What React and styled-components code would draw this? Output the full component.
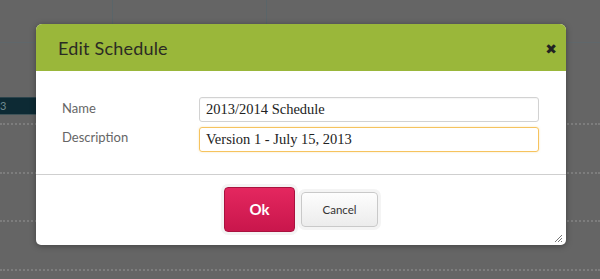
import React from "react";
import styled, { createGlobalStyle } from "styled-components";

const Global = createGlobalStyle`
  html, body { margin: 0; padding: 0; }
  body { width: 600px; height: 279px; overflow: hidden; background: #666; font-family: "Lato", "Open Sans", sans-serif; }
`;

const Page = styled.div`
  position: relative;
  width: 600px;
  height: 279px;
  background: #656565;
  overflow: hidden;
`;

const Board = styled.div`
  display: flex;
  flex-direction: column;
`;

const TopRow = styled.div`
  display: grid;
  grid-template-columns: 113px 154px 1fr;
  height: 42px;
  border-bottom: 1px solid #5f676b;
`;

const TopCell = styled.div`
  border-right: ${(p) => (p.$line ? "1px solid #5a6569" : "none")};
`;

const DarkBar = styled.div`
  margin-top: 54px;
  height: 16px;
  width: 120px;
  background: #0d2a34;
  border-top: 1px solid #2b434b;
  border-bottom: 1px solid #3f5358;
  color: #6f8a90;
  font-size: 11px;
  line-height: 16px;
  box-sizing: content-box;
`;

const Dotted = styled.div`
  margin-top: ${(p) => p.$gap}px;
  height: 0;
  border-top: 2px dotted #7d7d7d;
`;

const Dialog = styled.div`
  position: absolute;
  left: 36px;
  top: 24px;
  width: 530px;
  height: 221px;
  background: #fff;
  border-radius: 6px 6px 5px 5px;
  box-shadow: 0 1px 6px rgba(0, 0, 0, 0.35);
  display: flex;
  flex-direction: column;
  overflow: hidden;
`;

const Header = styled.div`
  height: 47px;
  background: #9ab73a;
  display: flex;
  align-items: center;
  justify-content: space-between;
  padding: 0 9px 0 22px;
  flex-shrink: 0;
`;

const Title = styled.div`
  font-family: "Lato", "Open Sans", sans-serif;
  font-size: 18px;
  color: #2b2b24;
  letter-spacing: 0.2px;
`;

const Close = styled.div`
  font-family: "DejaVu Sans", sans-serif;
  font-weight: bold;
  font-size: 14px;
  color: #222;
  margin-top: 2px;
`;

const Body = styled.div`
  padding: 26px 27px 22px 26px;
  display: grid;
  grid-template-columns: 137px 340px;
  row-gap: 5px;
  align-items: center;
  border-bottom: 1px solid #cfcfcf;
`;

const Label = styled.div`
  font-family: "Lato", sans-serif;
  font-size: 13px;
  color: #666;
  margin-top: ${(p) => p.$offset || 0}px;
  align-self: start;
`;

const Input = styled.div`
  height: 25px;
  box-sizing: border-box;
  border: 1px solid ${(p) => (p.$focus ? "#f6c35e" : "#d2d2d2")};
  border-radius: 3px;
  padding: 0 6px;
  font-family: "Liberation Serif", "DejaVu Serif", serif;
  font-size: 14.5px;
  color: #222;
  line-height: 23px;
  box-shadow: ${(p) => (p.$focus ? "0 0 2px rgba(246, 195, 94, 0.5)" : "inset 0 1px 1px rgba(0,0,0,0.04)")};
`;

const Footer = styled.div`
  flex: 1;
  display: flex;
  justify-content: center;
  align-items: center;
  gap: 6px;
  padding-bottom: 2px;
  position: relative;
`;

const Button = styled.button`
  box-sizing: border-box;
  border-radius: 4px;
  cursor: pointer;
  font-family: "Lato", sans-serif;
  box-shadow: 0 0 0 3px #f4f4f4;
  padding: 0;
`;

const OkButton = styled(Button)`
  width: 71px;
  height: 45px;
  background: linear-gradient(#e4275f, #c9164c);
  border: 1px solid #a9123f;
  color: #fff;
  font-weight: bold;
  font-size: 15px;
`;

const CancelButton = styled(Button)`
  width: 77px;
  height: 35px;
  background: linear-gradient(#fdfdfd, #ececec);
  border: 1px solid #c9c9c9;
  color: #333;
  font-size: 11.5px;
`;

const Grip = styled.svg`
  position: absolute;
  right: 3px;
  bottom: 2px;
`;

export default function App() {
  return (
    <>
      <Global />
      <Page>
        <Board>
          <TopRow>
            <TopCell $line />
            <TopCell $line />
            <TopCell />
          </TopRow>
          <DarkBar>3</DarkBar>
          <Dotted $gap={8} />
          <Dotted $gap={47} />
          <Dotted $gap={46} />
          <Dotted $gap={47} />
        </Board>
        <Dialog>
          <Header>
            <Title>Edit Schedule</Title>
            <Close>✖</Close>
          </Header>
          <Body>
            <Label $offset={3}>Name</Label>
            <Input>2013/2014 Schedule</Input>
            <Label $offset={2}>Description</Label>
            <Input $focus>Version 1 - July 15, 2013</Input>
          </Body>
          <Footer>
            <OkButton>Ok</OkButton>
            <CancelButton>Cancel</CancelButton>
            <Grip width="9" height="9" viewBox="0 0 9 9">
              <path d="M8 1 L1 8 M8 4 L4 8 M8 7 L7 8" stroke="#777" strokeWidth="1" />
            </Grip>
          </Footer>
        </Dialog>
      </Page>
    </>
  );
}
